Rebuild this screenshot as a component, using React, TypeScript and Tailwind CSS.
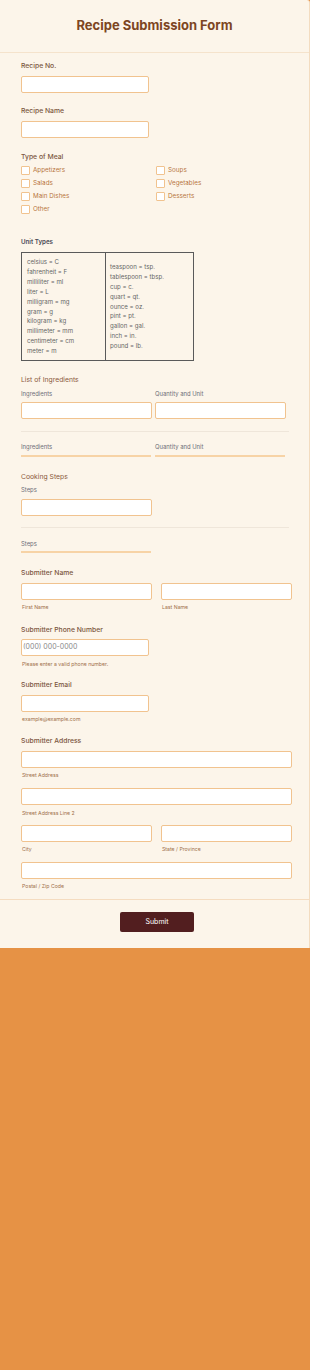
import React from 'react';

const font = { fontFamily: 'Inter, "Noto Sans", sans-serif' };

const Label = ({ children, className = '' }: { children: React.ReactNode; className?: string }) => (
  <div className={`h-[10px] text-[6.8px] leading-[10px] font-medium text-[#7b5640] ${className}`}>{children}</div>
);

const Sub = ({ children, className = '' }: { children: React.ReactNode; className?: string }) => (
  <div className={`h-[8px] text-[5.2px] leading-[8px] text-[#a0704a] ${className}`}>{children}</div>
);

const Hint = ({ children, className = '' }: { children: React.ReactNode; className?: string }) => (
  <div className={`h-[8px] text-[5.9px] leading-[8px] text-[#6e6e78] ${className}`}>{children}</div>
);

const Input = ({ className = '', placeholder }: { className?: string; placeholder?: string }) => (
  <div className={`h-[17px] shrink-0 border border-[#f1c38f] rounded-[2px] bg-white flex items-center px-[1px] text-[7px] text-[#8a8a8a] ${className}`}>
    {placeholder}
  </div>
);

const Check = ({ label }: { label: string }) => (
  <div className="flex items-center h-[9px]">
    <span className="w-[9px] h-[9px] border border-[#f1c38f] rounded-[1px] bg-white shrink-0"></span>
    <span className="ml-[3px] text-[6.3px] leading-[9px] text-[#b8763f]">{label}</span>
  </div>
);

const metric = ['celsius = C', 'fahrenheit = F', 'milliliter = ml', 'liter = L', 'milligram = mg', 'gram = g', 'kilogram = kg', 'millimeter = mm', 'centimeter = cm', 'meter = m'];
const imperial = ['teaspoon = tsp.', 'tablespoon = tbsp.', 'cup = c.', 'quart = qt.', 'ounce = oz.', 'pint = pt.', 'gallon = gal.', 'inch = in.', 'pound = lb.'];

export default function App() {
  return (
    <div className="min-h-[1370px] bg-[#e69245]" style={font}>
      <div className="bg-[#fcf5ea] w-full border-r border-[#f3dcc0] rounded-tr-[3px]">
        {/* Header */}
        <div className="h-[53px] border-b border-[#f5e3cc] flex items-center justify-center">
          <h1 className="text-[13px] font-bold text-[#7d4522]">Recipe Submission Form</h1>
        </div>

        <div className="pl-[21px] pr-[16px]">
          <Label className="mt-[8px]">Recipe No.</Label>
          <Input className="mt-[5px] w-[128px]" />

          <Label className="mt-[13px]">Recipe Name</Label>
          <Input className="mt-[5px] w-[128px]" />

          <Label className="mt-[14px]">Type of Meal</Label>
          <div className="mt-[4px] grid grid-cols-[135px_1fr] gap-y-[4px]">
            <Check label="Appetizers" />
            <Check label="Soups" />
            <Check label="Salads" />
            <Check label="Vegetables" />
            <Check label="Main Dishes" />
            <Check label="Desserts" />
            <Check label="Other" />
          </div>

          <div className="mt-[23px] h-[10px] text-[6.2px] leading-[10px] font-semibold text-[#4b4b57]">Unit Types</div>
          <div className="mt-[5px] w-[173px] h-[109px] border border-[#5a5a5a] flex text-[6.1px] leading-[9.9px] text-[#666]">
            <div className="w-[84px] border-r border-[#5a5a5a] px-[5px] flex flex-col justify-center">
              {metric.map((m) => (
                <div key={m}>{m}</div>
              ))}
            </div>
            <div className="flex-1 px-[4px] flex flex-col justify-center">
              {imperial.map((m) => (
                <div key={m}>{m}</div>
              ))}
            </div>
          </div>

          {/* List of Ingredients */}
          <Label className="mt-[14px] font-normal text-[#8b5a3c]">List of Ingredients</Label>
          <div className="mt-[5px] flex gap-[3px]">
            <Hint className="w-[131px]">Ingredients</Hint>
            <Hint className="w-[131px]">Quantity and Unit</Hint>
          </div>
          <div className="mt-[4px] flex gap-[3px]">
            <Input className="w-[131px]" />
            <Input className="w-[131px]" />
          </div>
          <div className="mt-[12px] h-px bg-[#efe6da] w-[268px]"></div>
          <div className="mt-[11px] flex gap-[3px]">
            <Hint className="w-[131px]">Ingredients</Hint>
            <Hint className="w-[131px]">Quantity and Unit</Hint>
          </div>
          <div className="mt-[4px] flex gap-[4px]">
            <div className="w-[130px] h-[2px] bg-[#f7d3a6]"></div>
            <div className="w-[130px] h-[2px] bg-[#f7d3a6]"></div>
          </div>

          {/* Cooking Steps */}
          <Label className="mt-[15px] font-normal text-[#8b5a3c]">Cooking Steps</Label>
          <Hint className="mt-[4px]">Steps</Hint>
          <Input className="mt-[5px] w-[131px]" />
          <div className="mt-[11px] h-px bg-[#efe6da] w-[268px]"></div>
          <Hint className="mt-[12px]">Steps</Hint>
          <div className="mt-[3px] w-[130px] h-[2px] bg-[#f7d3a6]"></div>

          {/* Submitter Name */}
          <Label className="mt-[15px]">Submitter Name</Label>
          <div className="mt-[5px] flex gap-[9px]">
            <Input className="w-[131px]" />
            <Input className="w-[131px]" />
          </div>
          <div className="mt-[3px] flex gap-[9px]">
            <Sub className="w-[131px] pl-[1px]">First Name</Sub>
            <Sub className="w-[131px] pl-[1px]">Last Name</Sub>
          </div>

          {/* Phone */}
          <Label className="mt-[14px]">Submitter Phone Number</Label>
          <Input className="mt-[4px] w-[128px]" placeholder="(000) 000-0000" />
          <Sub className="mt-[4px] pl-[1px]">Please enter a valid phone number.</Sub>

          {/* Email */}
          <Label className="mt-[12px]">Submitter Email</Label>
          <Input className="mt-[5px] w-[128px]" />
          <Sub className="mt-[3px] pl-[1px]">example@example.com</Sub>

          {/* Address */}
          <Label className="mt-[13px]">Submitter Address</Label>
          <Input className="mt-[5px] w-[271px]" />
          <Sub className="mt-[3px] pl-[1px]">Street Address</Sub>
          <Input className="mt-[9px] w-[271px]" />
          <Sub className="mt-[4px] pl-[1px]">Street Address Line 2</Sub>
          <div className="mt-[8px] flex gap-[9px]">
            <Input className="w-[131px]" />
            <Input className="w-[131px]" />
          </div>
          <div className="mt-[3px] flex gap-[9px]">
            <Sub className="w-[131px] pl-[1px]">City</Sub>
            <Sub className="w-[131px] pl-[1px]">State / Province</Sub>
          </div>
          <Input className="mt-[9px] w-[271px]" />
          <Sub className="mt-[3px] pl-[1px]">Postal / Zip Code</Sub>
        </div>

        <div className="mt-[9px] h-px bg-[#f5dcc0]"></div>

        {/* Footer */}
        <div className="pt-[12px] pb-[16px] pl-[5px] flex justify-center">
          <button className="w-[74px] h-[20px] bg-[#521e1f] rounded-[2px] text-white text-[7px]">Submit</button>
        </div>
      </div>
    </div>
  );
}
